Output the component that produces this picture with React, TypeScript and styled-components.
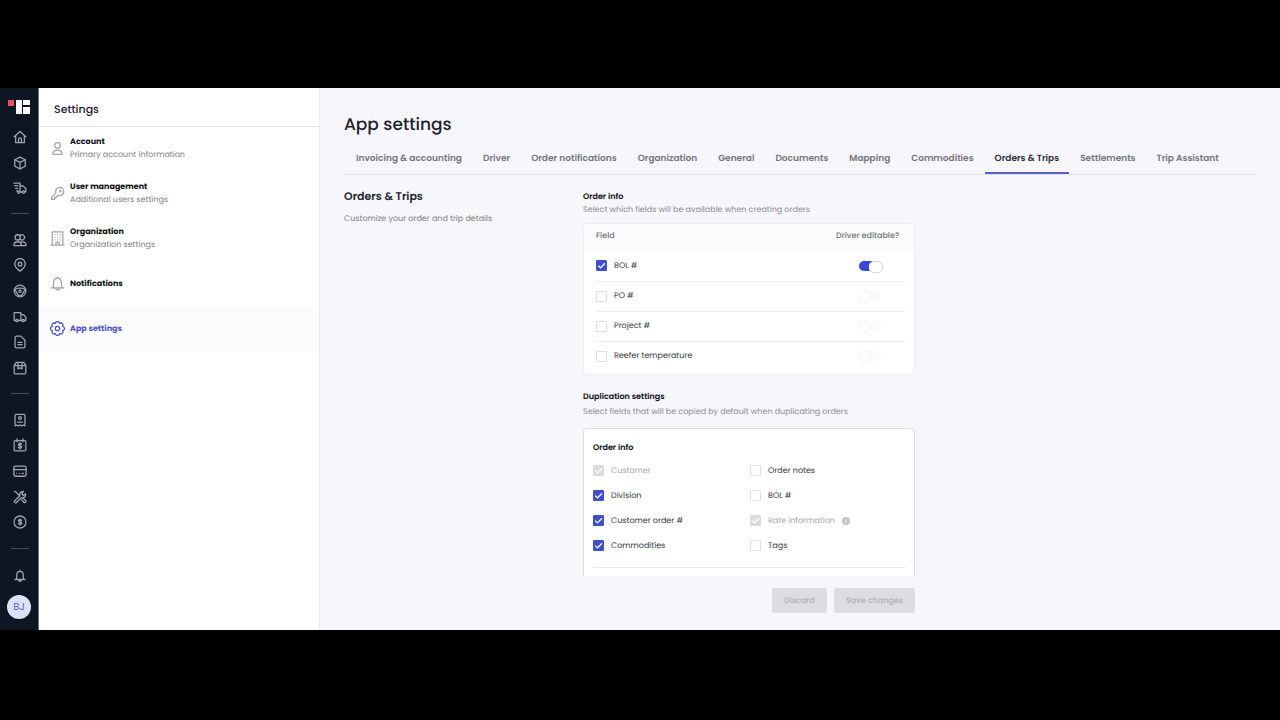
import React from "react";
import styled, { createGlobalStyle, css } from "styled-components";

const Global = createGlobalStyle`
  * { box-sizing: border-box; }
  body { margin: 0; background: #000; font-family: Poppins, Inter, "Open Sans", sans-serif; font-size: 8px; line-height: 12px; color: #3f414a; text-rendering: geometricPrecision; }
  h1, h2, h3, p, ul { margin: 0; padding: 0; }
  ul { list-style: none; }
  button { font: inherit; border: 0; background: none; padding: 0; cursor: pointer; text-rendering: inherit; }
  a { color: inherit; text-decoration: none; }
`;

const Stage = styled.div`
  height: 100vh;
  padding: 88px 0 90px;
  display: flex;
`;

const Rail = styled.nav`
  width: 39px;
  flex: none;
  display: flex;
  flex-direction: column;
  align-items: center;
  background: #0e1523;
  border-right: 1px solid #6a6f78;
  padding-bottom: 11px;
`;

const Logo = styled.a`
  height: 36px;
  display: flex;
  align-items: center;
`;

const RailList = styled.ul`
  && { padding-left: 1px; }
  flex: 1;
  width: 100%;
  display: flex;
  flex-direction: column;
`;

const RailItem = styled.li`
  flex: 1;
  display: flex;
  align-items: center;
  justify-content: center;
`;

const RailButton = styled.button`
  && { color: #a0a4ad; }
  display: flex;
`;

const RailRule = styled.hr`
  width: 18px;
  margin: 0;
  border: 0;
  border-top: 1px solid #434955;
`;

const RailBell = styled(RailButton)`
  && {
    height: 34px;
    padding: 0 0 4px 1px;
    align-items: center;
  }
`;

const Avatar = styled.button`
  && {
    width: 24px;
    height: 24px;
    border-radius: 50%;
    background: #dbe3fb;
    color: #6064cc;
    font-size: 10px;
  }
`;

const Side = styled.aside`
  width: 281px;
  flex: none;
  background: #fff;
  border-right: 1px solid #e9e9ee;
`;

const SideTitle = styled.h2`
  && { padding: 4px 15px 0; }
  height: 39px;
  display: flex;
  align-items: center;
  border-bottom: 1px solid #e2e2e6;
  font-size: 11px;
  font-weight: 500;
  color: #1f212b;
`;

const SideLink = styled.a<{ $active?: boolean }>`
  height: 45px;
  padding: 0 0 2px 11px;
  display: flex;
  align-items: center;
  gap: 5px;
  color: ${(p) => (p.$active ? "#5052cc" : "#111217")};
  background: ${(p) => (p.$active ? "#fbfbfd" : "transparent")};
  svg { color: ${(p) => (p.$active ? "#4e50cc" : "#a2a3a9")}; }
`;

const SideName = styled.div`
  font-weight: 700;
`;

const Muted = styled.p`
  color: #7f8086;
  line-height: 13px;
`;

const Main = styled.main`
  flex: 1;
  min-width: 0;
  display: flex;
  flex-direction: column;
  background: #f7f6fa;
  padding: 24px 24px 17px;
`;

const PageTitle = styled.h1`
  font-size: 17px;
  line-height: 24px;
  font-weight: 500;
  color: #1d1f2b;
`;

const Tabs = styled.div`
  display: flex;
  gap: 1px;
  margin-top: 6px;
  padding-left: 2px;
  border-bottom: 1px solid #e4e0e6;
`;

const Tab = styled.button<{ $active?: boolean }>`
  && {
    height: 32px;
    padding: 4px 10px 0;
    font-size: 9px;
    font-weight: 600;
    white-space: nowrap;
    color: ${(p) => (p.$active ? "#2b2c36" : "#74757c")};
    border-bottom: 2px solid ${(p) => (p.$active ? "#5560c8" : "transparent")};
  }
`;

const Body = styled.div`
  flex: 1;
  min-height: 0;
  overflow: hidden;
  display: flex;
  padding-top: 15px;
`;

const Intro = styled.section`
  width: 239px;
  flex: none;
`;

const IntroTitle = styled.h2`
  && { margin-bottom: 10px; }
  font-size: 11px;
  font-weight: 600;
  color: #23252f;
`;

const Forms = styled.div`
  width: 332px;
  padding-top: 1px;
`;

const GroupTitle = styled.h3<{ $gap?: number }>`
  && { margin-bottom: ${(p) => p.$gap || 0}px; }
  font-size: 8px;
  font-weight: 600;
  color: #0c0d12;
`;

const Hint = styled.p`
  color: #8d8e94;
  line-height: 14px;
`;

const Card = styled.div`
  background: #fff;
  border: 1px solid #e6e5ea;
  border-radius: 4px;
`;

const TableCard = styled(Card)`
  margin: 6px 0 16px;
  padding: 0 9px 3px 12px;
  background: linear-gradient(#fbfafd 28px, #fff 28px);
  border-color: #eeedf1;
`;

const Table = styled.table`
  width: 100%;
  border-collapse: collapse;
`;

const Th = styled.th`
  height: 27px;
  padding: 0 0 4px;
  text-align: left;
  font-weight: 500;
  color: #74757b;
  &:last-child { width: 69px; white-space: nowrap; }
`;

const Td = styled.td`
  height: 30px;
  padding: 0;
  tr + tr > & { border-top: 1px solid #ececef; }
  &:last-child { padding-left: 23px; }
`;

const Label = styled.label<{ $off?: boolean }>`
  display: flex;
  align-items: center;
  gap: 7px;
  color: ${(p) => (p.$off ? "#a6a7ab" : "#363841")};
`;

const tick = css`
  background-image: url("data:image/svg+xml,%3Csvg xmlns='http://www.w3.org/2000/svg' viewBox='0 0 11 11' fill='none' stroke='white' stroke-width='1.3'%3E%3Cpath d='M2.2 5.6 4.5 7.9 9 3.2'/%3E%3C/svg%3E");
`;

const Check = styled.input.attrs({ type: "checkbox" })`
  appearance: none;
  width: 11px;
  height: 11px;
  margin: 0;
  flex: none;
  border-radius: 1px;
  border: 1px solid #dedee2;
  background: #fff center / 11px no-repeat;
  &:checked { border-color: #3f50cf; background-color: #3f50cf; ${tick} }
  &:checked:disabled { border-color: #dcdcdf; background-color: #dcdcdf; }
`;

const Switch = styled.input.attrs({ type: "checkbox", role: "switch" })`
  appearance: none;
  display: block;
  width: 22px;
  height: 10px;
  margin: 0;
  border-radius: 5px;
  background: #fcfbfc;
  &::before {
    content: "";
    display: block;
    width: 10px;
    height: 10px;
    border-radius: 5px;
    background: #fff;
    border: 1px solid #f4f1f3;
  }
  &:checked { background: #3b47d8; }
  &:checked::before { width: 12px; margin-left: 10px; border-color: #d5d6e2; border-left-color: #fff; }
`;

const DupCard = styled(Card)`
  margin-top: 9px;
  padding: 13px 8px 12px 9px;
  border-color: #dddde1;
`;

const Options = styled.div`
  display: grid;
  grid-template-columns: 157px 1fr;
  grid-auto-rows: 25px;
  margin-top: 4px;
  padding: 0 0 9px;
  border-bottom: 1px solid #ebebee;
`;

const Footer = styled.footer`
  width: 571px;
  padding-top: 12px;
  display: flex;
  justify-content: flex-end;
  gap: 7px;
`;

const Action = styled.button`
  && {
    height: 25px;
    padding: 0 12px;
    border-radius: 3px;
    background: #dddce0;
    color: #b0afb4;
    font-weight: 500;
  }
`;

type IconProps = { size?: number; width?: number; children: React.ReactNode };
const Icon = ({ size = 14, width = 2.2, children }: IconProps) => (
  <svg width={size} height={size} viewBox="0 0 24 24" fill="none" stroke="currentColor" strokeWidth={width} strokeLinecap="round" strokeLinejoin="round" aria-hidden="true">
    {children}
  </svg>
);

const dollar = <path d="M14.8 9.6c-.3-1-1.400-1.500-2.800-1.500-1.600 0-2.800.7-2.800 1.900 0 2.700 5.700 1.300 5.700 4 0 1.200-1.200 1.900-2.900 1.900-1.500 0-2.600-.6-2.900-1.600M12 6.500v11" />;
const bell = <path d="M3.500 18h17M5.500 18c.9-1.500 1-3 1-7.500C6.500 6.500 9 4 12 4s5.500 2.500 5.500 6.500c0 4.500.1 6 1 7.500M12 4V2M9.500 18.300c.3 2 1.200 2.900 2.500 2.900s2.200-.9 2.500-2.900" />;

const railIcons: Array<[string, React.ReactNode] | null> = [
  ["Home", <><path d="M2 11.500 12 2.500l10 9M4.500 9.500V21.500h15V9.500" /><path d="M9.500 21v-5a2.500 2.500 0 0 1 5 0v5" /></>],
  ["Loads", <><path d="M12 2 21 6.500v11L12 22l-9-4.500v-11z" /><path d="m3 6.500 9 4.500 9-4.500M12 11v11" /></>],
  ["Dispatch", <><path d="M1.500 3.500H12v13.500M3 8h5M4.500 12.500H8M6 17h1.500M12 8.500l4.500-.5 5.500 5v5.500h-1.500M15.500 19H13" /><circle cx="10" cy="19" r="2" /><circle cx="18" cy="19" r="2" /></>],
  null,
  ["Drivers", <><circle cx="8" cy="7.500" r="4.500" /><path d="M12.500 3.900a4.500 4.500 0 1 1 0 7.200" /><path d="M1.500 21.500c0-4.500 2.500-6.500 6.500-6.500s6.500 2 6.500 6.500zM14 15.300c5.500-1 8.500 1.700 8.500 6.200h-8" /></>],
  ["Locations", <><path d="M12 22.500s9-6 9-12.500a9 9 0 0 0-18 0c0 6.500 9 12.500 9 12.500z" /><circle cx="12" cy="10.500" r="3.200" /></>],
  ["Fleet", <><circle cx="12" cy="12" r="10" /><path d="M3 9.500c5-2.500 13-2.500 18 0M3.500 10.500 10 20.500M20.500 10.500 14 20.500M9.500 20h5" /><circle cx="12" cy="12.500" r="2" /></>],
  ["Trucks", <><path d="M4.500 18H2V4.500h11.500V18H9M13.500 8H18l4 4.500V18h-2.500M15 18h-1.500" /><circle cx="6.800" cy="18.200" r="2" /><circle cx="17.300" cy="18.200" r="2" /></>],
  ["Documents", <><path d="M13.500 2H6a2.500 2.500 0 0 0-2.500 2.500v15A2.500 2.500 0 0 0 6 22h12a2.500 2.500 0 0 0 2.500-2.500V9z" /><path d="M8.500 12.500h7M8.500 16.500h7" /></>],
  ["Inventory", <><path d="M2 8 5.500 2.500h13L22 8v12a2 2 0 0 1-2 2H4a2 2 0 0 1-2-2zM2 8h20" /><path d="M8.500 3v10.500l3.500-2 3.500 2V3" /></>],
  null,
  ["Invoices", <><path d="M3.500 22V4a1.800 1.800 0 0 1 1.800-1.800h13.400A1.800 1.800 0 0 1 20.500 4v18l-3-1.500-2.500 1.500-3-1.500L9 22l-2.500-1.500z" /><circle cx="12" cy="8.500" r="2.300" /><path d="M8 15.500h8" /></>],
  ["Payroll", <><rect x="2" y="4.500" width="20" height="17.500" rx="2" /><path d="M7 1.500v5M17 1.500v5" /><g transform="translate(0 1.500)">{dollar}</g></>],
  ["Cards", <><rect x="1.500" y="3.500" width="21" height="17.500" rx="3" /><path d="M2 9.500h20M6.500 16h.1M11 16h.1M15.500 16h2.500" /></>],
  ["Maintenance", <><path d="m2.500 2.500 3 1L11 10" /><path d="M21.500 6.500 18 9.500 15 6.500 18 2.500A5.500 5.500 0 0 0 11.800 10L3 18.300A2.200 2.200 0 0 0 6 21.500L14.200 13A5.500 5.500 0 0 0 21.500 6.500zM14.500 16.500l4 4.500a2.200 2.200 0 0 0 3.200-3L17.500 14" /></>],
  ["Expenses", <><circle cx="12" cy="12" r="10.300" />{dollar}</>],
  null,
];

const polar = (deg: number, r: number) => {
  const a = (deg * Math.PI) / 180;
  return `${(12 + r * Math.sin(a)).toFixed(2)} ${(12 - r * Math.cos(a)).toFixed(2)}`;
};
const gearPath =
  "M" +
  Array.from({ length: 8 }, (_, k) => k * 45)
    .map((d) => `${polar(d - 13, 10.6)} Q${polar(d, 12)} ${polar(d + 13, 10.6)} L${polar(d + 22.5, 8.8)}`)
    .join(" L") +
  "Z";

const gear = (
  <>
    <path d={gearPath} />
    <circle cx="12" cy="12" r="3.500" />
  </>
);

const sideItems: Array<{ name: string; note?: string; icon: React.ReactNode; active?: boolean }> = [
  { name: "Account", note: "Primary account information", icon: <><circle cx="12" cy="7" r="4.500" /><path d="M4.500 21.500c0-4.500 2.500-7 7.500-7s7.500 2.500 7.500 7z" /></> },
  { name: "User management", note: "Additional users settings", icon: <><path d="M9.500 11A6.500 6.500 0 1 1 14 15l-2 1.500H9.500V19H7v2.500H2.500V18z" /><circle cx="16.500" cy="8" r="1" /></> },
  { name: "Organization", note: "Organization settings", icon: <><path d="M1.500 22.500h21M3.500 22.500V1.500h17v21M9.500 22.500V18h5v4.500" /><path d="M8 6h.1M12 6h.1M16 6h.1M8 10h.1M12 10h.1M16 10h.1M8 14h.1M12 14h.1M16 14h.1" /></> },
  { name: "Notifications", icon: <path d="M2 19h20M4.500 19c1.500-2.500 1-5 1.200-8.500C6 6 8.500 3.500 12 3.500s6 2.500 6.300 7c.2 3.500-.3 6 1.200 8.500M12 3.500v-2M9 19.300c.3 2.200 1.300 3.200 3 3.200s2.700-1 3-3.200" /> },
  { name: "App settings", icon: gear, active: true },
];

const tabs = ["Invoicing & accounting", "Driver", "Order notifications", "Organization", "General", "Documents", "Mapping", "Commodities", "Orders & Trips", "Settlements", "Trip Assistant"];

const fields = [["BOL #", true], ["PO #", false], ["Project #", false], ["Reefer temperature", false]] as const;

const options: Array<{ name: string; on?: boolean; off?: boolean; info?: boolean }> = [
  { name: "Customer", on: true, off: true },
  { name: "Order notes" },
  { name: "Division", on: true },
  { name: "BOL #" },
  { name: "Customer order #", on: true },
  { name: "Rate information", on: true, off: true, info: true },
  { name: "Commodities", on: true },
  { name: "Tags" },
];

export default function App() {
  return (
    <>
      <Global />
      <Stage>
        <Rail aria-label="Main">
          <Logo href="#" aria-label="Dashboard">
            <svg width="22" height="15" viewBox="0 0 22 15" aria-hidden="true">
              <path fill="#e8505f" d="M0 1h6v6H0z" />
              <path fill="#fff" d="M8 1h6v14H8zM15 1h7v5h-7zM15 8h7v7h-7z" />
            </svg>
          </Logo>
          <RailList>
            {railIcons.map((item, i) => (
              <RailItem key={i}>
                {item ? <RailButton type="button" aria-label={item[0]}><Icon>{item[1]}</Icon></RailButton> : <RailRule />}
              </RailItem>
            ))}
          </RailList>
          <RailBell type="button" aria-label="Alerts"><Icon>{bell}</Icon></RailBell>
          <Avatar type="button">BJ</Avatar>
        </Rail>

        <Side>
          <SideTitle>Settings</SideTitle>
          {sideItems.map((s) => (
            <SideLink key={s.name} href="#" $active={s.active}>
              <Icon size={15} width={2}>{s.icon}</Icon>
              <div>
                <SideName>{s.name}</SideName>
                {s.note && <Muted>{s.note}</Muted>}
              </div>
            </SideLink>
          ))}
        </Side>

        <Main>
          <PageTitle>App settings</PageTitle>
          <Tabs role="tablist">
            {tabs.map((t) => (
              <Tab key={t} type="button" role="tab" aria-selected={t === "Orders & Trips"} $active={t === "Orders & Trips"}>{t}</Tab>
            ))}
          </Tabs>
          <Body>
            <Intro>
              <IntroTitle>Orders &amp; Trips</IntroTitle>
              <Muted>Customize your order and trip details</Muted>
            </Intro>
            <Forms>
              <GroupTitle>Order info</GroupTitle>
              <Hint>Select which fields will be available when creating orders</Hint>
              <TableCard>
                <Table>
                  <thead>
                    <tr><Th>Field</Th><Th>Driver editable?</Th></tr>
                  </thead>
                  <tbody>
                    {fields.map(([name, on]) => (
                      <tr key={name}>
                        <Td><Label><Check defaultChecked={on} />{name}</Label></Td>
                        <Td><Switch defaultChecked={on} aria-label={`${name} driver editable`} /></Td>
                      </tr>
                    ))}
                  </tbody>
                </Table>
              </TableCard>
              <GroupTitle $gap={2}>Duplication settings</GroupTitle>
              <Hint>Select fields that will be copied by default when duplicating orders</Hint>
              <DupCard>
                <GroupTitle>Order info</GroupTitle>
                <Options>
                  {options.map((o) => (
                    <Label key={o.name} $off={o.off}>
                      <Check defaultChecked={o.on} disabled={o.off} />
                      {o.name}
                      {o.info && (
                        <svg width="8" height="8" viewBox="0 0 8 8" aria-hidden="true">
                          <circle cx="4" cy="4" r="4" fill="#c4c4c8" />
                          <path d="M4 3.500V6M4 1.800v.8" stroke="#fff" />
                        </svg>
                      )}
                    </Label>
                  ))}
                </Options>
              </DupCard>
            </Forms>
          </Body>
          <Footer>
            <Action type="button" disabled>Discard</Action>
            <Action type="button" disabled>Save changes</Action>
          </Footer>
        </Main>
      </Stage>
    </>
  );
}
